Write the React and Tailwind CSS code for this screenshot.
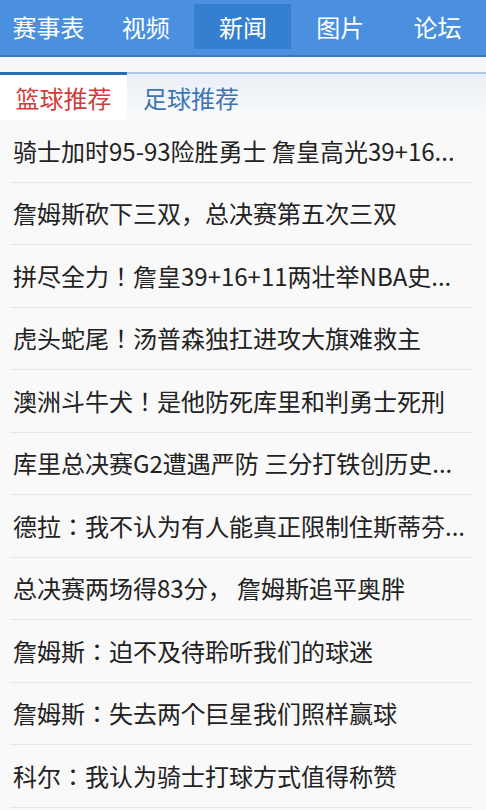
import { useState } from 'react';

const navItems = ['赛事表', '视频', '新闻', '图片', '论坛'];

const news = [
    '骑士加时95-93险胜勇士 詹皇高光39+16...',
    '詹姆斯砍下三双，总决赛第五次三双',
    '拼尽全力！詹皇39+16+11两壮举NBA史...',
    '虎头蛇尾！汤普森独扛进攻大旗难救主',
    '澳洲斗牛犬！是他防死库里和判勇士死刑',
    '库里总决赛G2遭遇严防 三分打铁创历史...',
    '德拉：我不认为有人能真正限制住斯蒂芬...',
    '总决赛两场得83分， 詹姆斯追平奥胖',
    '詹姆斯：迫不及待聆听我们的球迷',
    '詹姆斯：失去两个巨星我们照样赢球',
    '科尔：我认为骑士打球方式值得称赞',
];

export default function App() {
    const [active, setActive] = useState(2);
    const [tab, setTab] = useState(0);

    return (
        <div
            className="w-[486px] h-[810px] overflow-hidden bg-[#f9f9f9]"
            style={{ fontFamily: '"Noto Sans CJK JP", "Noto Sans CJK SC", "Noto Sans", sans-serif' }}
        >
            {/* Top nav */}
            <div className="h-[57px] bg-[#4a90de] border-b-2 border-[#3b78c0] grid grid-cols-5 pt-[4px]">
                {navItems.map((item, i) => (
                    <div key={item} className="flex justify-center">
                        <button
                            onClick={() => setActive(i)}
                            className={`w-[97px] h-[45px] flex items-center justify-center text-[24px] text-white ${
                                active === i ? 'bg-[#347fcf]' : ''
                            }`}
                        >
                            {item}
                        </button>
                    </div>
                ))}
            </div>

            <div className="h-[15px] bg-[#f7f8fa]"></div>

            {/* Sub tabs */}
            <div className="h-[48px] flex bg-gradient-to-b from-[#e9eff5] to-[#fafbfc] border-t-2 border-[#a9c9e8]">
                <button
                    onClick={() => setTab(0)}
                    className={`w-[127px] -mt-[2px] border-t-[3px] flex items-center justify-center text-[24px] ${
                        tab === 0 ? 'bg-white border-[#2a6db5] text-[#d13b3b]' : 'border-transparent text-[#3f74b3]'
                    }`}
                >
                    篮球推荐
                </button>
                <button
                    onClick={() => setTab(1)}
                    className={`w-[128px] -mt-[2px] border-t-[3px] flex items-center justify-center text-[24px] ${
                        tab === 1 ? 'bg-white border-[#2a6db5] text-[#d13b3b]' : 'border-transparent text-[#3f74b3]'
                    }`}
                >
                    足球推荐
                </button>
            </div>

            {/* News list */}
            <div>
                {news.map((title) => (
                    <div key={title} className="h-[62.5px] ml-[10px] mr-[14px] border-b border-[#e6e6e6] flex items-center">
                        <p className="pl-[3px] text-[24px] leading-none text-[#222] whitespace-nowrap">{title}</p>
                    </div>
                ))}
            </div>
        </div>
    );
}
